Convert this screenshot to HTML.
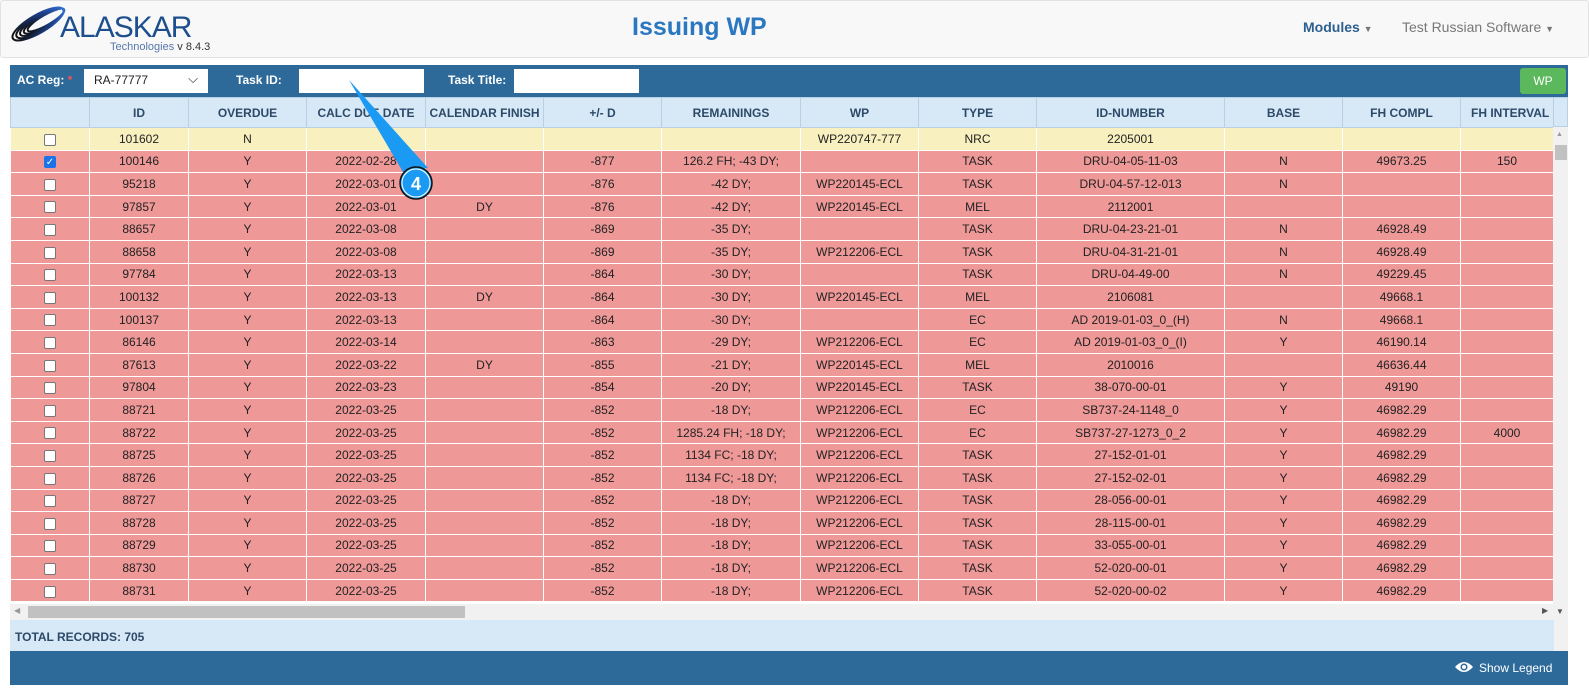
<!DOCTYPE html>
<html><head><meta charset="utf-8"><style>
*{box-sizing:border-box;margin:0;padding:0}
body{width:1589px;height:696px;background:#fff;font-family:"Liberation Sans",Arial,sans-serif;position:relative;overflow:hidden}
.hdr{position:absolute;left:0;top:0;width:1589px;height:58px;background:#f8f8f8;border:1px solid #e2e2e2;border-radius:3px}
.abs{position:absolute}
.tb{position:absolute;left:10px;top:65px;width:1558px;height:32px;background:#2d6a9a}
.tb .l{position:absolute;top:8px;color:#fff;font-weight:bold;font-size:12px}
.inp{position:absolute;top:4px;height:24px;background:#fff}
table{position:absolute;left:10px;top:97px;width:1543px;border-collapse:collapse;table-layout:fixed;font-size:12px;color:#222}
td{height:22.6px;text-align:center;border:1px solid #fff;white-space:nowrap;overflow:hidden;padding:0}
tr.h td{height:30px;background:#d7e8f7;color:#2c4a68;font-size:12px;font-weight:bold;border:1px solid #b9cfe2}
tr.y td{background:#f8f0bf}
tr.r td{background:#ef9898}
.cb{display:inline-block;width:12px;height:12px;border:1px solid #777;border-radius:2px;background:#fff;vertical-align:middle}
.cbk{background:#1a73e8;border-color:#1a73e8;color:#fff;font-size:10px;line-height:11px}
</style></head><body>
<div class="hdr"></div>
<svg class="abs" style="left:8px;top:5px" width="60" height="40" viewBox="0 0 60 40">
<defs><linearGradient id="g" x1="0" x2="1"><stop offset="0" stop-color="#111"/><stop offset="0.6" stop-color="#1d3f8a"/><stop offset="1" stop-color="#2f6fd0"/></linearGradient></defs>
<g fill="none" stroke="url(#g)" stroke-width="2">
<ellipse cx="30" cy="19" rx="29" ry="9" transform="rotate(-30 30 19)"/>
<ellipse cx="32" cy="18" rx="27" ry="8" transform="rotate(-30 32 18)"/>
<ellipse cx="34" cy="17" rx="25" ry="7" transform="rotate(-30 34 17)"/>
<ellipse cx="36" cy="16" rx="23" ry="6" transform="rotate(-30 36 16)"/>
<ellipse cx="38" cy="15" rx="21" ry="5" transform="rotate(-30 38 15)"/>
</g></svg>
<div class="abs" style="left:60px;top:13px;font-size:30px;color:#1d4f8f;letter-spacing:-1px;line-height:30px">ALASKAR</div>
<div class="abs" style="left:110px;top:41px;font-size:11px;color:#5577aa">Technologies <span style="color:#333;font-size:11px">v 8.4.3</span></div>
<div class="abs" style="left:632px;top:13px;font-size:25px;font-weight:bold;color:#2b78c0">Issuing WP</div>
<div class="abs" style="left:1303px;top:19px;font-size:14px;font-weight:bold;color:#2d5f8f">Modules <span style="font-size:9px;color:#777">▼</span></div>
<div class="abs" style="left:1402px;top:19px;font-size:14px;color:#777">Test Russian Software <span style="font-size:9px">▼</span></div>

<div class="tb">
<div class="l" style="left:7px">AC Reg: <span style="color:#e55">*</span></div>
<div class="inp" style="left:74px;width:124px;font-size:12px;color:#222;padding:4px 0 0 10px">RA-77777<span style="position:absolute;right:10px;top:2px;font-size:13px">⌵</span></div>
<div class="l" style="left:226px">Task ID:</div>
<div class="inp" style="left:289px;width:125px"></div>
<div class="l" style="left:438px">Task Title:</div>
<div class="inp" style="left:504px;width:125px"></div>
<div class="abs" style="left:1510px;top:3px;width:46px;height:26px;background:#5cb85c;border-radius:3px;color:#fff;font-size:12px;text-align:center;line-height:26px">WP</div>
</div>

<table>
<colgroup><col style="width:79px"><col style="width:99px"><col style="width:118px"><col style="width:119px"><col style="width:118px"><col style="width:118px"><col style="width:139px"><col style="width:118px"><col style="width:118px"><col style="width:188px"><col style="width:118px"><col style="width:118px"><col style="width:93px"></colgroup>
<tr class="h"><td></td><td>ID</td><td>OVERDUE</td><td>CALC DUE DATE</td><td>CALENDAR FINISH</td><td>+/- D</td><td>REMAININGS</td><td>WP</td><td>TYPE</td><td>ID-NUMBER</td><td>BASE</td><td>FH COMPL</td><td style="text-align:left;padding-left:10px">FH INTERVAL</td></tr>
<tr class="y"><td><span class="cb"></span></td><td>101602</td><td>N</td><td></td><td></td><td></td><td></td><td>WP220747-777</td><td>NRC</td><td>2205001</td><td></td><td></td><td></td></tr>
<tr class="r"><td><span class="cb cbk">✓</span></td><td>100146</td><td>Y</td><td>2022-02-28</td><td></td><td>-877</td><td>126.2 FH; -43 DY;</td><td></td><td>TASK</td><td>DRU-04-05-11-03</td><td>N</td><td>49673.25</td><td>150</td></tr>
<tr class="r"><td><span class="cb"></span></td><td>95218</td><td>Y</td><td>2022-03-01</td><td></td><td>-876</td><td>-42 DY;</td><td>WP220145-ECL</td><td>TASK</td><td>DRU-04-57-12-013</td><td>N</td><td></td><td></td></tr>
<tr class="r"><td><span class="cb"></span></td><td>97857</td><td>Y</td><td>2022-03-01</td><td>DY</td><td>-876</td><td>-42 DY;</td><td>WP220145-ECL</td><td>MEL</td><td>2112001</td><td></td><td></td><td></td></tr>
<tr class="r"><td><span class="cb"></span></td><td>88657</td><td>Y</td><td>2022-03-08</td><td></td><td>-869</td><td>-35 DY;</td><td></td><td>TASK</td><td>DRU-04-23-21-01</td><td>N</td><td>46928.49</td><td></td></tr>
<tr class="r"><td><span class="cb"></span></td><td>88658</td><td>Y</td><td>2022-03-08</td><td></td><td>-869</td><td>-35 DY;</td><td>WP212206-ECL</td><td>TASK</td><td>DRU-04-31-21-01</td><td>N</td><td>46928.49</td><td></td></tr>
<tr class="r"><td><span class="cb"></span></td><td>97784</td><td>Y</td><td>2022-03-13</td><td></td><td>-864</td><td>-30 DY;</td><td></td><td>TASK</td><td>DRU-04-49-00</td><td>N</td><td>49229.45</td><td></td></tr>
<tr class="r"><td><span class="cb"></span></td><td>100132</td><td>Y</td><td>2022-03-13</td><td>DY</td><td>-864</td><td>-30 DY;</td><td>WP220145-ECL</td><td>MEL</td><td>2106081</td><td></td><td>49668.1</td><td></td></tr>
<tr class="r"><td><span class="cb"></span></td><td>100137</td><td>Y</td><td>2022-03-13</td><td></td><td>-864</td><td>-30 DY;</td><td></td><td>EC</td><td>AD 2019-01-03_0_(H)</td><td>N</td><td>49668.1</td><td></td></tr>
<tr class="r"><td><span class="cb"></span></td><td>86146</td><td>Y</td><td>2022-03-14</td><td></td><td>-863</td><td>-29 DY;</td><td>WP212206-ECL</td><td>EC</td><td>AD 2019-01-03_0_(I)</td><td>Y</td><td>46190.14</td><td></td></tr>
<tr class="r"><td><span class="cb"></span></td><td>87613</td><td>Y</td><td>2022-03-22</td><td>DY</td><td>-855</td><td>-21 DY;</td><td>WP220145-ECL</td><td>MEL</td><td>2010016</td><td></td><td>46636.44</td><td></td></tr>
<tr class="r"><td><span class="cb"></span></td><td>97804</td><td>Y</td><td>2022-03-23</td><td></td><td>-854</td><td>-20 DY;</td><td>WP220145-ECL</td><td>TASK</td><td>38-070-00-01</td><td>Y</td><td>49190</td><td></td></tr>
<tr class="r"><td><span class="cb"></span></td><td>88721</td><td>Y</td><td>2022-03-25</td><td></td><td>-852</td><td>-18 DY;</td><td>WP212206-ECL</td><td>EC</td><td>SB737-24-1148_0</td><td>Y</td><td>46982.29</td><td></td></tr>
<tr class="r"><td><span class="cb"></span></td><td>88722</td><td>Y</td><td>2022-03-25</td><td></td><td>-852</td><td>1285.24 FH; -18 DY;</td><td>WP212206-ECL</td><td>EC</td><td>SB737-27-1273_0_2</td><td>Y</td><td>46982.29</td><td>4000</td></tr>
<tr class="r"><td><span class="cb"></span></td><td>88725</td><td>Y</td><td>2022-03-25</td><td></td><td>-852</td><td>1134 FC; -18 DY;</td><td>WP212206-ECL</td><td>TASK</td><td>27-152-01-01</td><td>Y</td><td>46982.29</td><td></td></tr>
<tr class="r"><td><span class="cb"></span></td><td>88726</td><td>Y</td><td>2022-03-25</td><td></td><td>-852</td><td>1134 FC; -18 DY;</td><td>WP212206-ECL</td><td>TASK</td><td>27-152-02-01</td><td>Y</td><td>46982.29</td><td></td></tr>
<tr class="r"><td><span class="cb"></span></td><td>88727</td><td>Y</td><td>2022-03-25</td><td></td><td>-852</td><td>-18 DY;</td><td>WP212206-ECL</td><td>TASK</td><td>28-056-00-01</td><td>Y</td><td>46982.29</td><td></td></tr>
<tr class="r"><td><span class="cb"></span></td><td>88728</td><td>Y</td><td>2022-03-25</td><td></td><td>-852</td><td>-18 DY;</td><td>WP212206-ECL</td><td>TASK</td><td>28-115-00-01</td><td>Y</td><td>46982.29</td><td></td></tr>
<tr class="r"><td><span class="cb"></span></td><td>88729</td><td>Y</td><td>2022-03-25</td><td></td><td>-852</td><td>-18 DY;</td><td>WP212206-ECL</td><td>TASK</td><td>33-055-00-01</td><td>Y</td><td>46982.29</td><td></td></tr>
<tr class="r"><td><span class="cb"></span></td><td>88730</td><td>Y</td><td>2022-03-25</td><td></td><td>-852</td><td>-18 DY;</td><td>WP212206-ECL</td><td>TASK</td><td>52-020-00-01</td><td>Y</td><td>46982.29</td><td></td></tr>
<tr class="r"><td><span class="cb"></span></td><td>88731</td><td>Y</td><td>2022-03-25</td><td></td><td>-852</td><td>-18 DY;</td><td>WP212206-ECL</td><td>TASK</td><td>52-020-00-02</td><td>Y</td><td>46982.29</td><td></td></tr>
</table>

<div class="abs" style="left:1553px;top:97px;width:15px;height:30px;background:#d7e8f7;border:1px solid #b9cfe2"></div>
<div class="abs" style="left:1553px;top:127px;width:15px;height:477px;background:#f1f1f1"></div>
<div class="abs" style="left:1556px;top:131px;font-size:7px;color:#999">▲</div>
<div class="abs" style="left:1555px;top:145px;width:12px;height:15px;background:#c1c1c1"></div>
<div class="abs" style="left:10px;top:604px;width:1558px;height:16px;background:#f1f1f1"></div>
<div class="abs" style="left:14px;top:606px;font-size:8px;color:#999">◀</div>
<div class="abs" style="left:28px;top:606px;width:437px;height:12px;background:#c1c1c1"></div>
<div class="abs" style="left:1542px;top:606px;font-size:8px;color:#555">▶</div>
<div class="abs" style="left:1556px;top:607px;font-size:8px;color:#555">▼</div>
<div class="abs" style="left:10px;top:620px;width:1544px;height:31px;background:#d7e8f7;color:#2c4a68;font-weight:bold;font-size:12px;padding:10px 0 0 5px">TOTAL RECORDS: 705</div>
<div class="abs" style="left:1554px;top:620px;width:14px;height:31px;background:#f1f1f1"></div>
<div class="abs" style="left:10px;top:651px;width:1558px;height:34px;background:#2d6a9a"></div>
<svg class="abs" style="left:1454px;top:660px" width="20" height="14" viewBox="0 0 20 14"><path d="M1 7 Q10 -3 19 7 Q10 17 1 7Z" fill="#fff"/><circle cx="10" cy="7" r="3.5" fill="#2d6a9a"/><circle cx="10" cy="7" r="2" fill="#fff"/></svg>
<div class="abs" style="left:1479px;top:661px;color:#fff;font-size:12px">Show Legend</div>

<svg class="abs" style="left:0;top:0" width="1589" height="696">
<polygon points="349,80 403,172 428,168" fill="#1a9af2"/>
<circle cx="416" cy="183" r="16" fill="#1a9af2" stroke="#111" stroke-width="1.5"/>
<circle cx="416" cy="183" r="14" fill="none" stroke="#fff" stroke-width="1"/>
<text x="416" y="190" text-anchor="middle" font-family="Liberation Sans" font-weight="bold" font-size="18" fill="#fff">4</text>
</svg>
</body></html>
